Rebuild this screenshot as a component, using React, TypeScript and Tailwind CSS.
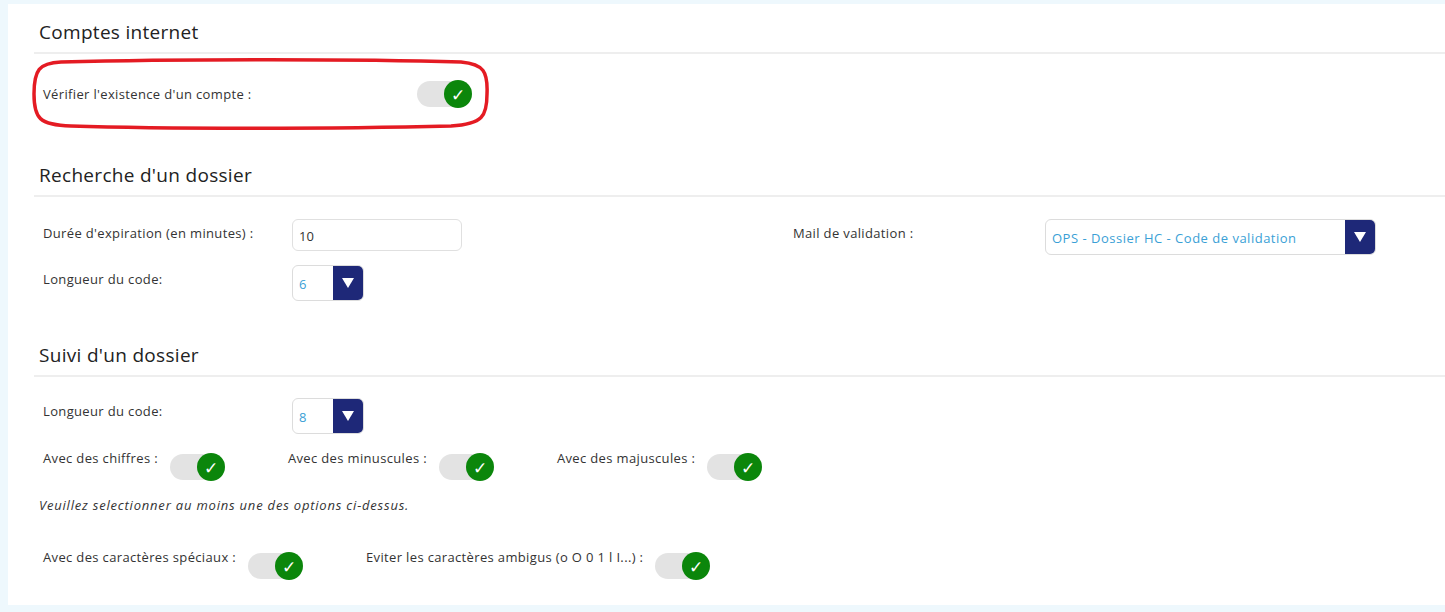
import React from "react";

const font = { fontFamily: "'Open Sans', 'Liberation Sans', sans-serif" };

const Toggle = ({ className }: { className?: string }) => (
  <div className={`relative h-[28px] w-[55px] shrink-0 ${className ?? ""}`}>
    <div className="absolute left-0 top-[1px] h-[26px] w-[52px] rounded-full bg-[#e3e3e3]" />
    <div className="absolute right-0 top-0 flex h-[28px] w-[28px] items-center justify-center rounded-full bg-[#0b860b] text-[17px] leading-none text-white">
      ✓
    </div>
  </div>
);

const Select = ({ value, width }: { value: string; width: string }) => (
  <div
    className={`flex h-[36px] ${width} overflow-hidden rounded-md border border-[#dcdcdc] bg-white`}
  >
    <div className="flex flex-1 items-center pl-[6px] pt-[3px] text-[13px] tracking-[0.5px] text-[#3a9fd6]">
      {value}
    </div>
    <div className="flex w-[30px] items-center justify-center bg-[#1e2878]">
      <svg width="12" height="10" viewBox="0 0 12 10">
        <path d="M0 0 H12 L6 10 Z" fill="white" />
      </svg>
    </div>
  </div>
);

const SectionTitle = ({ children }: { children: React.ReactNode }) => (
  <div className="border-b-2 border-[#eeeeee] pb-[9px] pl-[5px] text-[19px] leading-[22px] tracking-[0.3px] text-[#222]">
    {children}
  </div>
);

const label = "text-[13px] leading-[18px] tracking-[0.35px] text-[#333]";

const Labeled = ({ text }: { text: string }) => (
  <div className="flex items-start gap-[12px]">
    <span className={label}>{text}</span>
    <Toggle className="mt-[4px]" />
  </div>
);

export default function App() {
  return (
    <div className="h-[612px] w-[1445px] bg-[#eef8fd] pl-[8px] pt-[4px]" style={font}>
      <div className="relative h-[601px] bg-white pl-[26px] pt-[17px]">
        {/* annotation */}
        <svg
          className="pointer-events-none absolute left-[23px] top-[54px]"
          width="460"
          height="72"
          viewBox="0 0 460 72"
        >
          <path
            d="M30 4 C150 1 330 1 430 4 C453 6 457 14 456 36 C456 58 452 66 420 68 C300 71 130 71 40 68 C8 67 3 60 3 36 C3 12 8 5 30 4 Z"
            fill="none"
            stroke="#e41b23"
            strokeWidth="3.5"
          />
        </svg>

        <SectionTitle>Comptes internet</SectionTitle>
        <div className="flex items-center pl-[9px] pt-[26px]">
          <span className={`w-[374px] ${label}`}>Vérifier l'existence d'un compte :</span>
          <Toggle />
        </div>

        <div className="pt-[56px]">
          <SectionTitle>Recherche d'un dossier</SectionTitle>
        </div>
        <div className="flex pl-[9px] pt-[22px]">
          <div className="flex w-[750px] flex-col gap-[14px]">
            <div className="flex items-start">
              <span className={`w-[249px] pt-[5px] ${label}`}>
                Durée d'expiration (en minutes) :
              </span>
              <div className="flex h-[32px] w-[170px] items-center rounded-md border border-[#e0e0e0] pl-[6px] pt-[3px] text-[13px] text-[#333]">
                10
              </div>
            </div>
            <div className="flex items-start">
              <span className={`w-[249px] pt-[5px] ${label}`}>Longueur du code:</span>
              <Select value="6" width="w-[72px]" />
            </div>
          </div>
          <div className="flex items-start">
            <span className={`w-[252px] pt-[5px] ${label}`}>Mail de validation :</span>
            <Select value="OPS - Dossier HC - Code de validation" width="w-[331px]" />
          </div>
        </div>

        <div className="pt-[43px]">
          <SectionTitle>Suivi d'un dossier</SectionTitle>
        </div>
        <div className="flex items-start pl-[9px] pt-[21px]">
          <span className={`w-[249px] pt-[4px] ${label}`}>Longueur du code:</span>
          <Select value="8" width="w-[72px]" />
        </div>
        <div className="flex gap-[63px] pl-[9px] pt-[15px]">
          <Labeled text="Avec des chiffres :" />
          <Labeled text="Avec des minuscules :" />
          <Labeled text="Avec des majuscules :" />
        </div>
        <div className="pl-[5px] pt-[15px] text-[13px] italic leading-[18px] tracking-[0.8px] text-[#333]">
          Veuillez selectionner au moins une des options ci-dessus.
        </div>
        <div className="flex gap-[63px] pl-[9px] pt-[34px]">
          <Labeled text="Avec des caractères spéciaux :" />
          <Labeled text="Eviter les caractères ambigus (o O 0 1 l I...) :" />
        </div>
      </div>
    </div>
  );
}
